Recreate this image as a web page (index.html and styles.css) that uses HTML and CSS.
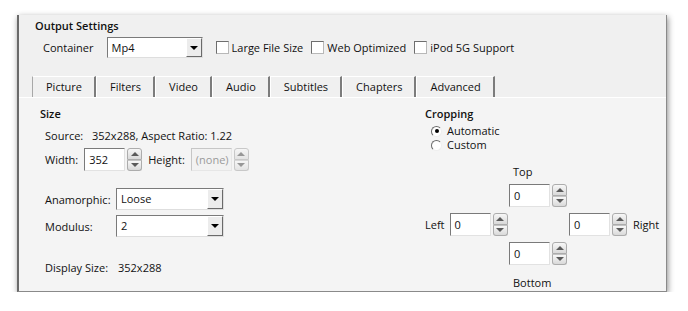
FILE: index.html
```html
<!DOCTYPE html>
<html lang="en">
<head>
    <meta charset="UTF-8">
    <meta name="viewport" content="width=device-width, initial-scale=1.0">
    <title>Output Settings</title>
    <link rel="stylesheet" href="styles.css">
</head>
<body>

<div class="window">
    <div class="group-title">Output Settings</div>

    <!-- Container + options -->
    <div class="container-row">
        <span class="row-label">Container</span>
        <div class="combo combo-container">
            <span class="combo-text">Mp4</span>
            <span class="combo-btn"></span>
        </div>
        <label class="check first"><span class="check-box"></span>Large File Size</label>
        <label class="check"><span class="check-box"></span>Web Optimized</label>
        <label class="check"><span class="check-box"></span>iPod 5G Support</label>
    </div>

    <!-- Tabs -->
    <div class="tabs">
        <div class="tab active">Picture</div>
        <div class="tab">Filters</div>
        <div class="tab">Video</div>
        <div class="tab">Audio</div>
        <div class="tab">Subtitles</div>
        <div class="tab">Chapters</div>
        <div class="tab">Advanced</div>
    </div>

    <div class="panel">
        <!-- Size -->
        <div class="size-col">
            <div class="section-title">Size</div>
            <div class="source-row">
                <span class="source-label">Source:</span>
                <span>352x288, Aspect Ratio: 1.22</span>
            </div>
            <div class="dim-row">
                <span>Width:</span>
                <div class="spin">
                    <div class="spin-field">352</div>
                    <div class="spin-btns"><span class="spin-up"></span><span class="spin-down"></span></div>
                </div>
                <span>Height:</span>
                <div class="spin disabled">
                    <div class="spin-field">(none)</div>
                    <div class="spin-btns"><span class="spin-up"></span><span class="spin-down"></span></div>
                </div>
            </div>
            <div class="field-grid">
                <span>Anamorphic:</span>
                <div class="combo combo-wide">
                    <span class="combo-text">Loose</span>
                    <span class="combo-btn"></span>
                </div>
                <span>Modulus:</span>
                <div class="combo combo-wide">
                    <span class="combo-text">2</span>
                    <span class="combo-btn"></span>
                </div>
            </div>
            <div class="display-row">
                <span class="display-label">Display Size:</span>
                <span>352x288</span>
            </div>
        </div>

        <!-- Cropping -->
        <div class="crop-col">
            <div class="section-title">Cropping</div>
            <div class="radios">
                <label class="radio"><span class="radio-dot checked"></span>Automatic</label>
                <label class="radio"><span class="radio-dot"></span>Custom</label>
            </div>
            <div class="crop-grid">
                <span class="crop-label top">Top</span>
                <div class="spin crop-top">
                    <div class="spin-field">0</div>
                    <div class="spin-btns"><span class="spin-up"></span><span class="spin-down"></span></div>
                </div>
                <div class="crop-left">
                    <span>Left</span>
                    <div class="spin">
                        <div class="spin-field">0</div>
                        <div class="spin-btns"><span class="spin-up"></span><span class="spin-down"></span></div>
                    </div>
                </div>
                <div class="crop-right">
                    <div class="spin">
                        <div class="spin-field">0</div>
                        <div class="spin-btns"><span class="spin-up"></span><span class="spin-down"></span></div>
                    </div>
                    <span>Right</span>
                </div>
                <div class="spin crop-bottom">
                    <div class="spin-field">0</div>
                    <div class="spin-btns"><span class="spin-up"></span><span class="spin-down"></span></div>
                </div>
                <span class="crop-label bottom">Bottom</span>
            </div>
        </div>
    </div>
</div>

</body>
</html>
```

FILE: styles.css
```css
body {
    margin: 0;
    background-color: #ffffff;
    font-family: "Open Sans", Arial, sans-serif;
    font-size: 11px;
    color: #111111;
}
.window {
    box-sizing: border-box;
    width: 650px;
    height: 277px;
    margin: 15px 0 0 17px;
    display: flex;
    flex-direction: column;
    background-color: #f0f0f0;
    border-left: 2px solid #6a6a6a;
    border-right: 1px solid #8a8a8a;
    border-bottom: 1px solid #8a8a8a;
    box-shadow: 1px 2px 6px rgba(0, 0, 0, 0.45);
}
.group-title {
    font-weight: 600;
    line-height: 15px;
    padding: 3px 0 0 16px;
}
.container-row {
    display: flex;
    align-items: center;
    height: 21px;
    margin-top: 4px;
    padding-left: 24px;
}
.row-label {
    margin-right: 13px;
}

/* combo box */
.combo {
    box-sizing: border-box;
    display: flex;
    height: 21px;
    background-color: #ffffff;
    border: 1px solid;
    border-color: #7a7a7a #dedede #dedede #7a7a7a;
}
.combo-container {
    width: 96px;
}
.combo-wide {
    width: 108px;
    height: 22px;
}
.combo-text {
    flex: 1;
    padding-left: 4px;
    line-height: 19px;
}
.combo-btn {
    box-sizing: border-box;
    width: 16px;
    display: flex;
    align-items: center;
    justify-content: center;
    background-color: #ececec;
    border: 1px solid;
    border-color: #ffffff #6a6a6a #6a6a6a #ffffff;
}
.combo-btn::after {
    content: "";
    border-left: 4px solid transparent;
    border-right: 4px solid transparent;
    border-top: 4px solid #000000;
}

/* checkbox */
.check {
    display: flex;
    align-items: center;
    gap: 3px;
    margin-left: 8px;
}
.check.first {
    margin-left: 13px;
}
.check-box {
    box-sizing: border-box;
    width: 13px;
    height: 13px;
    background-color: #ffffff;
    border: 1px solid;
    border-color: #6e6e6e #b8b8b8 #b8b8b8 #6e6e6e;
}

/* tabs */
.tabs {
    display: flex;
    height: 21px;
    margin-top: 18px;
    padding-left: 13px;
}
.tab {
    box-sizing: border-box;
    padding: 0 12px 0 13px;
    line-height: 19px;
    border-top: 1px solid #ffffff;
    border-left: 1px solid #ffffff;
    border-right: 2px solid #7c7c7c;
}
.tab.active {
    border-left-color: #a8a8a8;
}
.panel {
    flex: 1;
    display: flex;
    padding: 8px 0 0 21px;
    background-color: #f4f4f4;
    border-top: 1px solid #ffffff;
}
.section-title {
    font-weight: 600;
    line-height: 15px;
}

/* size column */
.size-col {
    width: 385px;
}
.source-row {
    display: flex;
    line-height: 15px;
    margin-top: 7px;
    padding-left: 5px;
}
.source-label {
    width: 47px;
}
.dim-row {
    display: flex;
    align-items: center;
    gap: 6px;
    margin-top: 5px;
    padding-left: 5px;
}
.field-grid {
    display: grid;
    grid-template-columns: 71px 108px;
    row-gap: 5px;
    align-items: center;
    margin-top: 17px;
    padding-left: 5px;
}
.display-row {
    display: flex;
    line-height: 15px;
    margin-top: 23px;
    padding-left: 5px;
}
.display-label {
    width: 73px;
}

/* spin box */
.spin {
    display: flex;
    gap: 2px;
    height: 23px;
}
.spin-field {
    box-sizing: border-box;
    width: 41px;
    padding-left: 4px;
    line-height: 21px;
    background-color: #ffffff;
    border: 1px solid;
    border-color: #7a7a7a #e2e2e2 #e2e2e2 #7a7a7a;
}
.spin-btns {
    width: 15px;
    display: flex;
    flex-direction: column;
}
.spin-btns span {
    flex: 1;
    box-sizing: border-box;
    display: flex;
    align-items: center;
    justify-content: center;
    border: 1px solid #acacac;
    background: linear-gradient(#f7f7f7, #d9d9d9);
}
.spin-up {
    border-radius: 3px 3px 0 0;
}
.spin-down {
    border-radius: 0 0 3px 3px;
    border-top-color: #c4c4c4 !important;
}
.spin-up::after {
    content: "";
    border-left: 4px solid transparent;
    border-right: 4px solid transparent;
    border-bottom: 4px solid #5a5a5a;
}
.spin-down::after {
    content: "";
    border-left: 4px solid transparent;
    border-right: 4px solid transparent;
    border-top: 4px solid #5a5a5a;
}
.spin.disabled .spin-field {
    color: #9a9a9a;
    background-color: #f2f2f2;
    border-color: #c6c6c6 #e6e6e6 #e6e6e6 #c6c6c6;
}
.spin.disabled .spin-btns {
    opacity: 0.6;
}

/* cropping column */
.crop-col {
    flex: 1;
}
.radios {
    margin-top: 3px;
    padding-left: 6px;
}
.radio {
    display: flex;
    align-items: center;
    gap: 5px;
    height: 14px;
    line-height: 14px;
}
.radio-dot {
    box-sizing: border-box;
    width: 11px;
    height: 11px;
    border-radius: 50%;
    background-color: #ffffff;
    border: 1px solid;
    border-color: #6a6a6a #eeeeee #eeeeee #6a6a6a;
    display: flex;
    align-items: center;
    justify-content: center;
}
.radio-dot.checked::after {
    content: "";
    width: 4px;
    height: 4px;
    border-radius: 50%;
    background-color: #000000;
}
.crop-grid {
    display: grid;
    grid-template-columns: 84px 60px auto;
    grid-template-rows: 12px 23px 23px 23px 12px;
    row-gap: 6px;
    margin-top: 14px;
}
.crop-label {
    grid-column: 2;
    padding-left: 4px;
    line-height: 12px;
}
.crop-label.top {
    grid-row: 1;
}
.crop-label.bottom {
    grid-row: 5;
    margin-top: 6px;
}
.crop-top {
    grid-column: 2;
    grid-row: 2;
}
.crop-bottom {
    grid-column: 2;
    grid-row: 4;
}
.crop-left {
    grid-column: 1;
    grid-row: 3;
    display: flex;
    align-items: center;
    gap: 5px;
}
.crop-right {
    grid-column: 3;
    grid-row: 3;
    display: flex;
    align-items: center;
    gap: 6px;
}
```
